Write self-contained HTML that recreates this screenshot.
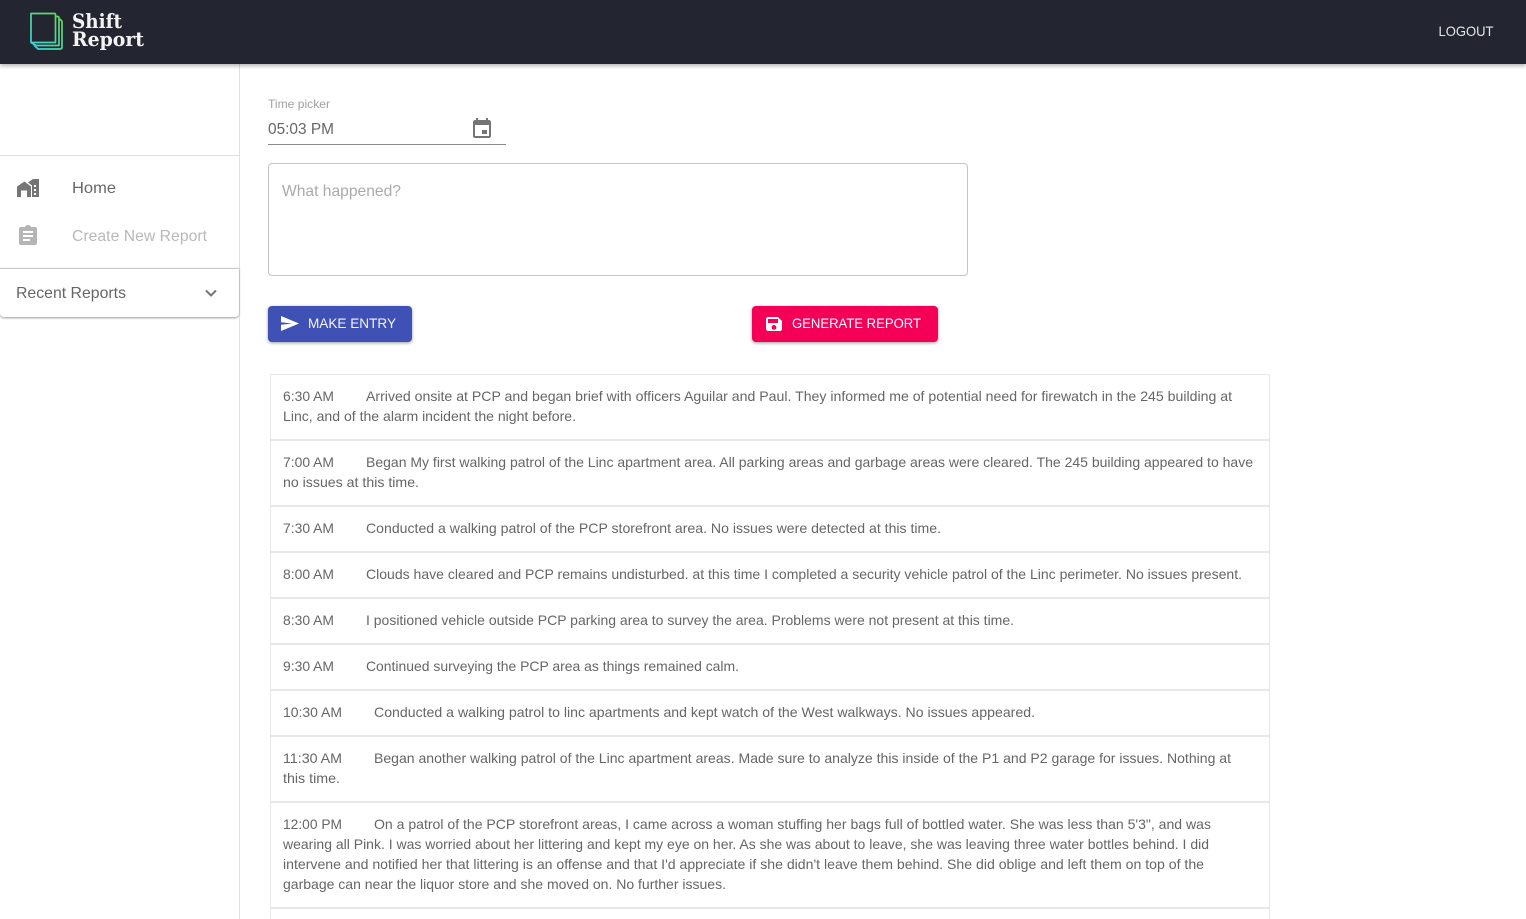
<!DOCTYPE html>
<html lang="en">
<head>
<meta charset="utf-8">
<title>Shift Report</title>
<style>
html,body{margin:0;padding:0;width:1526px;height:919px;overflow:hidden;background:#fff}
#p{position:relative;width:1526px;height:919px;overflow:hidden;background:#fff}
.a{position:absolute;box-sizing:border-box}
.row{position:absolute;left:270px;width:1000px;box-sizing:border-box;border:1px solid #e8e8e8;background:#fff}
svg text{font-family:"Liberation Sans",sans-serif;font-size:14px;fill:#666}
</style>
</head>
<body>
<div id="p">
<div class="a" style="left:0;top:0;width:1526px;height:64px;background:#232631;box-shadow:0 2px 4px rgba(0,0,0,.3);z-index:3"></div>
<div class="a" style="left:239px;top:64px;width:1px;height:855px;background:#e0e0e0"></div>
<div class="a" style="left:0;top:155px;width:239px;height:1px;background:#e0e0e0"></div>
<div class="a" style="left:0;top:268px;width:239px;height:49px;border-top:1px solid #c8c8c8;border-radius:0 0 4px 4px;box-shadow:0 1px 2px rgba(0,0,0,.4);background:#fff"></div>
<div class="a" style="left:268px;top:144px;width:238px;height:1px;background:#8c8c8c"></div>
<div class="a" style="left:268px;top:163px;width:700px;height:113px;border:1px solid #c4c4c4;border-radius:4px"></div>
<div class="a" style="left:268px;top:306px;width:144px;height:36px;background:#3f51b5;border-radius:4px;box-shadow:0 1px 3px rgba(0,0,0,.4)"></div>
<div class="a" style="left:752px;top:306px;width:186px;height:36px;background:#f50057;border-radius:4px;box-shadow:0 1px 3px rgba(0,0,0,.4)"></div>

<div class="row" style="top:374px;height:66px"></div>
<div class="row" style="top:440px;height:66px"></div>
<div class="row" style="top:506px;height:46px"></div>
<div class="row" style="top:552px;height:46px"></div>
<div class="row" style="top:598px;height:46px"></div>
<div class="row" style="top:644px;height:46px"></div>
<div class="row" style="top:690px;height:46px"></div>
<div class="row" style="top:736px;height:66px"></div>
<div class="row" style="top:802px;height:106px"></div>
<div class="row" style="top:908px;height:30px"></div>

<svg class="a" style="left:0;top:0;z-index:4" width="1526" height="919" viewBox="0 0 1526 919" xmlns="http://www.w3.org/2000/svg">
<defs>
<linearGradient id="g" gradientUnits="userSpaceOnUse" x1="30" y1="48" x2="62" y2="14"><stop offset="0" stop-color="#36d3e0"/><stop offset="1" stop-color="#66dc52"/></linearGradient>
</defs>
<!-- logo -->
<g fill="none" stroke="url(#g)" stroke-width="1.7" stroke-linejoin="round">
<path d="M31 13.5H54.5Q55.5 13.5 55.5 14.5V42.5H31Z"/>
<path d="M55.5 16.5H57.5Q59 16.5 59 18V45.5H36L31 42.5"/>
<path d="M59 19.5H60.5Q62 21 62 22V47Q62 49 60 49H38L34 45"/>
</g>
<text x="72" y="28" style="font-family:'DejaVu Serif',serif;font-size:20px;font-weight:700;fill:#f4f4f4" textLength="50" lengthAdjust="spacingAndGlyphs">Shift</text>
<text x="72" y="46" style="font-family:'DejaVu Serif',serif;font-size:20px;font-weight:700;fill:#f4f4f4" textLength="72" lengthAdjust="spacingAndGlyphs">Report</text>
<text x="1438.5" y="36" style="fill:#e6e6e6" textLength="55" lengthAdjust="spacingAndGlyphs">LOGOUT</text>

<!-- sidebar -->
<path fill="#757575" d="M17 197V186.5L24.5 181.5L31 186.5V197H27V190.5H21V197Z"/>
<path fill="#757575" fill-rule="evenodd" d="M28 182.5L33 179H39V197H32V185.5ZM34 185V187H36V185ZM34 189V191H36V189ZM34 193V195H36V193Z"/>
<path fill="#b5b5b5" fill-rule="evenodd" d="M21 227H25C25.4 225.5 26.6 225 28 225C29.4 225 30.6 225.5 31 227H35C36.2 227 37 227.8 37 229V243C37 244.2 36.2 245 35 245H21C19.8 245 19 244.2 19 243V229C19 227.8 19.8 227 21 227ZM23 231V233H33V231ZM23 235V237H33V235ZM23 239V241H30V239Z"/>
<text x="72" y="193" style="font-size:16px;fill:#666" textLength="44" lengthAdjust="spacingAndGlyphs">Home</text>
<text x="72" y="241" style="font-size:16px;fill:#b8b8b8" textLength="135" lengthAdjust="spacingAndGlyphs">Create New Report</text>
<text x="16" y="298" style="font-size:16px;fill:#666" textLength="110" lengthAdjust="spacingAndGlyphs">Recent Reports</text>
<path fill="none" stroke="#757575" stroke-width="2" d="M206 290.5L211 295.5L216 290.5"/>

<!-- form -->
<text x="268" y="108" style="font-size:12px;fill:#a0a0a0" textLength="62" lengthAdjust="spacingAndGlyphs">Time picker</text>
<text x="268" y="134" style="font-size:16px;fill:#666" textLength="66" lengthAdjust="spacingAndGlyphs">05:03 PM</text>
<path fill="#757575" fill-rule="evenodd" d="M476 118H478V120H486V118H488V120H489C490.1 120 491 120.9 491 122V136C491 137.1 490.1 138 489 138H475C473.9 138 473 137.1 473 136V122C473 120.9 473.9 120 475 120H476ZM475 125V136H489V125ZM482 130H487V134H482Z"/>
<text x="282" y="196" style="font-size:16px;fill:#aaa" textLength="119" lengthAdjust="spacingAndGlyphs">What happened?</text>

<!-- buttons -->
<path fill="#fff" d="M281 331V324.8L292 323.5L281 322.2V316L299 323.5Z"/>
<text x="308" y="328" style="fill:#f4f4fa" textLength="88" lengthAdjust="spacingAndGlyphs">MAKE ENTRY</text>
<path fill="#fff" fill-rule="evenodd" d="M768 317H778L782 321V329C782 330.1 781.1 331 780 331H768C766.9 331 766 330.1 766 329V319C766 317.9 766.9 317 768 317ZM768 319V323H778V319ZM774 325A2.4 2.4 0 1 0 774 329.8A2.4 2.4 0 1 0 774 325Z"/>
<text x="792" y="328" style="fill:#fff" textLength="129" lengthAdjust="spacingAndGlyphs">GENERATE REPORT</text>

<!-- entries -->
<text x="283" y="401" textLength="51" lengthAdjust="spacingAndGlyphs">6:30 AM</text>
<text x="366" y="401" textLength="866" lengthAdjust="spacingAndGlyphs">Arrived onsite at PCP and began brief with officers Aguilar and Paul. They informed me of potential need for firewatch in the 245 building at</text>
<text x="283" y="421" textLength="293" lengthAdjust="spacingAndGlyphs">Linc, and of the alarm incident the night before.</text>

<text x="283" y="467" textLength="51" lengthAdjust="spacingAndGlyphs">7:00 AM</text>
<text x="366" y="467" textLength="887" lengthAdjust="spacingAndGlyphs">Began My first walking patrol of the Linc apartment area. All parking areas and garbage areas were cleared. The 245 building appeared to have</text>
<text x="283" y="487" textLength="136" lengthAdjust="spacingAndGlyphs">no issues at this time.</text>

<text x="283" y="533" textLength="51" lengthAdjust="spacingAndGlyphs">7:30 AM</text>
<text x="366" y="533" textLength="575" lengthAdjust="spacingAndGlyphs">Conducted a walking patrol of the PCP storefront area. No issues were detected at this time.</text>

<text x="283" y="579" textLength="51" lengthAdjust="spacingAndGlyphs">8:00 AM</text>
<text x="366" y="579" textLength="876" lengthAdjust="spacingAndGlyphs">Clouds have cleared and PCP remains undisturbed. at this time I completed a security vehicle patrol of the Linc perimeter. No issues present.</text>

<text x="283" y="625" textLength="51" lengthAdjust="spacingAndGlyphs">8:30 AM</text>
<text x="366" y="625" textLength="648" lengthAdjust="spacingAndGlyphs">I positioned vehicle outside PCP parking area to survey the area. Problems were not present at this time.</text>

<text x="283" y="671" textLength="51" lengthAdjust="spacingAndGlyphs">9:30 AM</text>
<text x="366" y="671" textLength="373" lengthAdjust="spacingAndGlyphs">Continued surveying the PCP area as things remained calm.</text>

<text x="283" y="717" textLength="59" lengthAdjust="spacingAndGlyphs">10:30 AM</text>
<text x="374" y="717" textLength="661" lengthAdjust="spacingAndGlyphs">Conducted a walking patrol to linc apartments and kept watch of the West walkways. No issues appeared.</text>

<text x="283" y="763" textLength="59" lengthAdjust="spacingAndGlyphs">11:30 AM</text>
<text x="374" y="763" textLength="857" lengthAdjust="spacingAndGlyphs">Began another walking patrol of the Linc apartment areas. Made sure to analyze this inside of the P1 and P2 garage for issues. Nothing at</text>
<text x="283" y="783" textLength="57" lengthAdjust="spacingAndGlyphs">this time.</text>

<text x="283" y="829" textLength="59" lengthAdjust="spacingAndGlyphs">12:00 PM</text>
<text x="374" y="829" textLength="837" lengthAdjust="spacingAndGlyphs">On a patrol of the PCP storefront areas, I came across a woman stuffing her bags full of bottled water. She was less than 5'3", and was</text>
<text x="283" y="849" textLength="926" lengthAdjust="spacingAndGlyphs">wearing all Pink. I was worried about her littering and kept my eye on her. As she was about to leave, she was leaving three water bottles behind. I did</text>
<text x="283" y="869" textLength="921" lengthAdjust="spacingAndGlyphs">intervene and notified her that littering is an offense and that I'd appreciate if she didn't leave them behind. She did oblige and left them on top of the</text>
<text x="283" y="889" textLength="443" lengthAdjust="spacingAndGlyphs">garbage can near the liquor store and she moved on. No further issues.</text>
</svg>
</div>
</body>
</html>
